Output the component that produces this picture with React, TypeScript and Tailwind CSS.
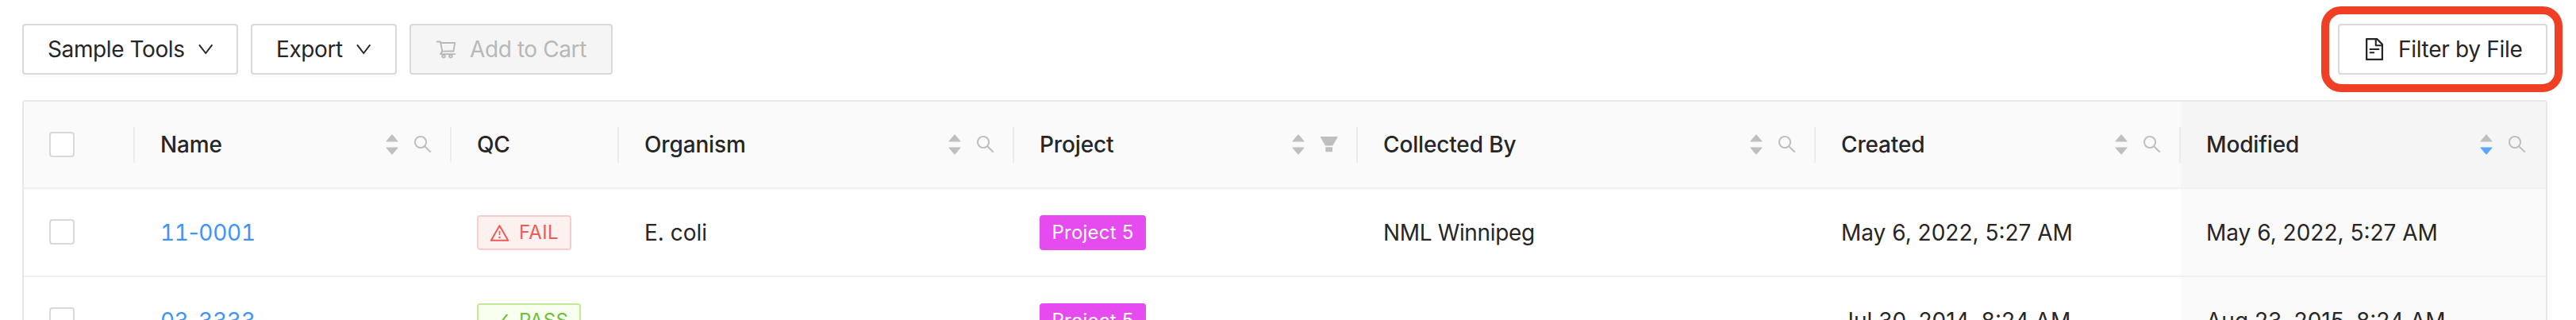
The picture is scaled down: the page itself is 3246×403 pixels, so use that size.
import React, { ReactNode } from "react";
import {
  AiFillCaretDown,
  AiFillCaretUp,
  AiFillFilter,
  AiOutlineCheck,
  AiOutlineFileText,
  AiOutlineSearch,
  AiOutlineShoppingCart,
  AiOutlineWarning,
} from "react-icons/ai";

const COLUMNS =
  "grid grid-cols-[140px_399px_211px_498px_433px_577px_460px_460px]";

function Checkbox({ className = "" }: { className?: string }) {
  return (
    <span
      role="checkbox"
      aria-checked="false"
      className={`block size-8 rounded-[4px] border-2 border-[#d9d9d9] bg-white ${className}`}
    />
  );
}

function ThinChevron() {
  return (
    <svg viewBox="0 0 20 20" className="size-5" fill="none" stroke="currentColor" strokeWidth="1.9">
      <path d="M2 4.3 L10.2 15 L18.4 4.3" />
    </svg>
  );
}

function MenuButton({ label, width }: { label: string; width: string }) {
  return (
    <button
      className={`flex h-16 items-center gap-4 rounded-[4px] border-2 border-[#d9d9d9] bg-white pl-[30px] tracking-[-0.4px] shadow-[0_4px_0_rgba(0,0,0,0.016)] ${width}`}
    >
      {label}
      <ThinChevron />
    </button>
  );
}

type HeaderProps = {
  title: string;
  sort?: "none" | "descending";
  filter?: "search" | "funnel";
  last?: boolean;
};

function HeaderCell({ title, sort, filter, last }: HeaderProps) {
  return (
    <div
      className={`flex h-full items-center pl-8 ${last ? "bg-[#f5f5f5] pr-0.5" : "bg-[#fafafa]"}`}
    >
      <span className="flex-1 font-medium tracking-[-0.15px]">{title}</span>
      {sort && (
        <span className="mr-4 flex flex-col text-[#bfbfbf]">
          <AiFillCaretUp className="size-[22px]" />
          <AiFillCaretDown
            className={`-mt-[6px] size-[22px] ${sort === "descending" ? "text-[#57a7fc]" : ""}`}
          />
        </span>
      )}
      {filter && (
        <span className="mr-[22px] flex size-6 items-center justify-center text-[#bfbfbf]">
          {filter === "search" ? (
            <AiOutlineSearch className="size-[27.4px] shrink-0" />
          ) : (
            <AiFillFilter className="size-[27.4px] shrink-0" />
          )}
        </span>
      )}
      {!last && <span className="h-[45px] w-0.5 bg-[#ebebeb]" />}
    </div>
  );
}

type Sample = {
  name: string;
  passed: boolean;
  organism: string;
  project: string;
  collectedBy: string;
  created: string;
  modified: string;
};

const SAMPLES: Sample[] = [
  {
    name: "11-0001",
    passed: false,
    organism: "E. coli",
    project: "Project 5",
    collectedBy: "NML Winnipeg",
    created: "May 6, 2022, 5:27 AM",
    modified: "May 6, 2022, 5:27 AM",
  },
  {
    name: "03-3333",
    passed: true,
    organism: "",
    project: "Project 5",
    collectedBy: "",
    created: "Jul 30, 2014, 8:24 AM",
    modified: "Aug 23, 2015, 8:24 AM",
  },
];

function SampleName({ name }: { name: string }) {
  const [prefix, number] = name.split("-");
  return (
    <span className="tracking-[-0.3px] tabular-nums">
      {prefix}
      <span className="normal-nums">-</span>
      {number}
    </span>
  );
}

function QcTag({ passed }: { passed: boolean }) {
  return (
    <span
      className={`flex h-11 items-center gap-[13px] rounded-[4px] border-2 pl-[14px] text-2xl tracking-[0.3px] ${
        passed
          ? "w-[131px] border-[#c0ea94] bg-[#f8ffee] text-[#6cc03c]"
          : "w-[119px] border-[#f7cdc9] bg-[#fdf1f0] text-[#ee5b56]"
      }`}
    >
      <span className="flex size-6 items-center justify-center">
        {passed ? (
          <AiOutlineCheck className="size-[27px] shrink-0" />
        ) : (
          <AiOutlineWarning className="size-[27px] shrink-0" />
        )}
      </span>
      {passed ? "PASS" : "FAIL"}
    </span>
  );
}

function Cell({ children, className = "" }: { children?: ReactNode; className?: string }) {
  return (
    <div className={`flex h-full items-center pt-px pl-8 whitespace-nowrap ${className}`}>
      {children}
    </div>
  );
}

function SampleRow({ sample }: { sample: Sample }) {
  return (
    <div className={`${COLUMNS} h-[111px] border-b-2 border-[#f0f0f0]`}>
      <Cell>
        <Checkbox className="-mt-0.5" />
      </Cell>
      <Cell className="text-[#3f94fb]">
        <SampleName name={sample.name} />
      </Cell>
      <Cell>
        <QcTag passed={sample.passed} />
      </Cell>
      <Cell>{sample.organism}</Cell>
      <Cell>
        <span className="flex h-11 w-[134px] items-center justify-center rounded-[4px] bg-[#e64bef] text-2xl tracking-[0.2px] text-white">
          {sample.project}
        </span>
      </Cell>
      <Cell className="tracking-[-0.35px]">{sample.collectedBy}</Cell>
      <Cell>{sample.created}</Cell>
      <Cell className="bg-[#fafafa]">{sample.modified}</Cell>
    </div>
  );
}

export default function App() {
  return (
    <div className="h-[403px] w-[3246px] overflow-hidden bg-white pt-[30px] pl-7 font-['Inter','Liberation_Sans',sans-serif] text-[28px] leading-[44px] text-[#262626]">
      <div className="flex w-[3182px] items-center gap-4">
        <MenuButton label="Sample Tools" width="w-[272px]" />
        <MenuButton label="Export" width="w-[184px]" />
        <button
          disabled
          className="flex h-16 w-[256px] items-center gap-4 rounded-[4px] border-2 border-[#d9d9d9] bg-[#f5f5f5] pl-[30px] tracking-[-0.4px] text-[#b8b8b8]"
        >
          <AiOutlineShoppingCart className="size-7" />
          Add to Cart
        </button>
        <div className="relative ml-auto">
          <button className="flex h-16 w-[264px] items-center gap-4 rounded-[4px] border-2 border-[#d9d9d9] bg-white pl-[30px] tracking-[-0.3px] shadow-[0_4px_0_rgba(0,0,0,0.016)]">
            <span className="flex size-7 items-center justify-center">
              <AiOutlineFileText className="size-8 shrink-0" />
            </span>
            Filter by File
          </button>
          <span className="absolute -top-[22px] -left-[21px] h-[108px] w-[304px] rounded-[25px] border-10 border-[#ef4026]" />
        </div>
      </div>

      <div className="mt-8 w-[3182px] overflow-hidden rounded-t-[4px] border-2 border-b-0 border-[#e8e8e8]">
        <div className={`${COLUMNS} h-[110px] border-b-2 border-[#f0f0f0]`}>
          <div className="flex h-full items-center bg-[#fafafa] pl-8">
            <Checkbox />
            <span className="ml-auto h-[45px] w-0.5 bg-[#ebebeb]" />
          </div>
          <HeaderCell title="Name" sort="none" filter="search" />
          <HeaderCell title="QC" />
          <HeaderCell title="Organism" sort="none" filter="search" />
          <HeaderCell title="Project" sort="none" filter="funnel" />
          <HeaderCell title="Collected By" sort="none" filter="search" />
          <HeaderCell title="Created" sort="none" filter="search" />
          <HeaderCell title="Modified" sort="descending" filter="search" last />
        </div>
        {SAMPLES.map((sample) => (
          <SampleRow key={sample.name} sample={sample} />
        ))}
      </div>
    </div>
  );
}
